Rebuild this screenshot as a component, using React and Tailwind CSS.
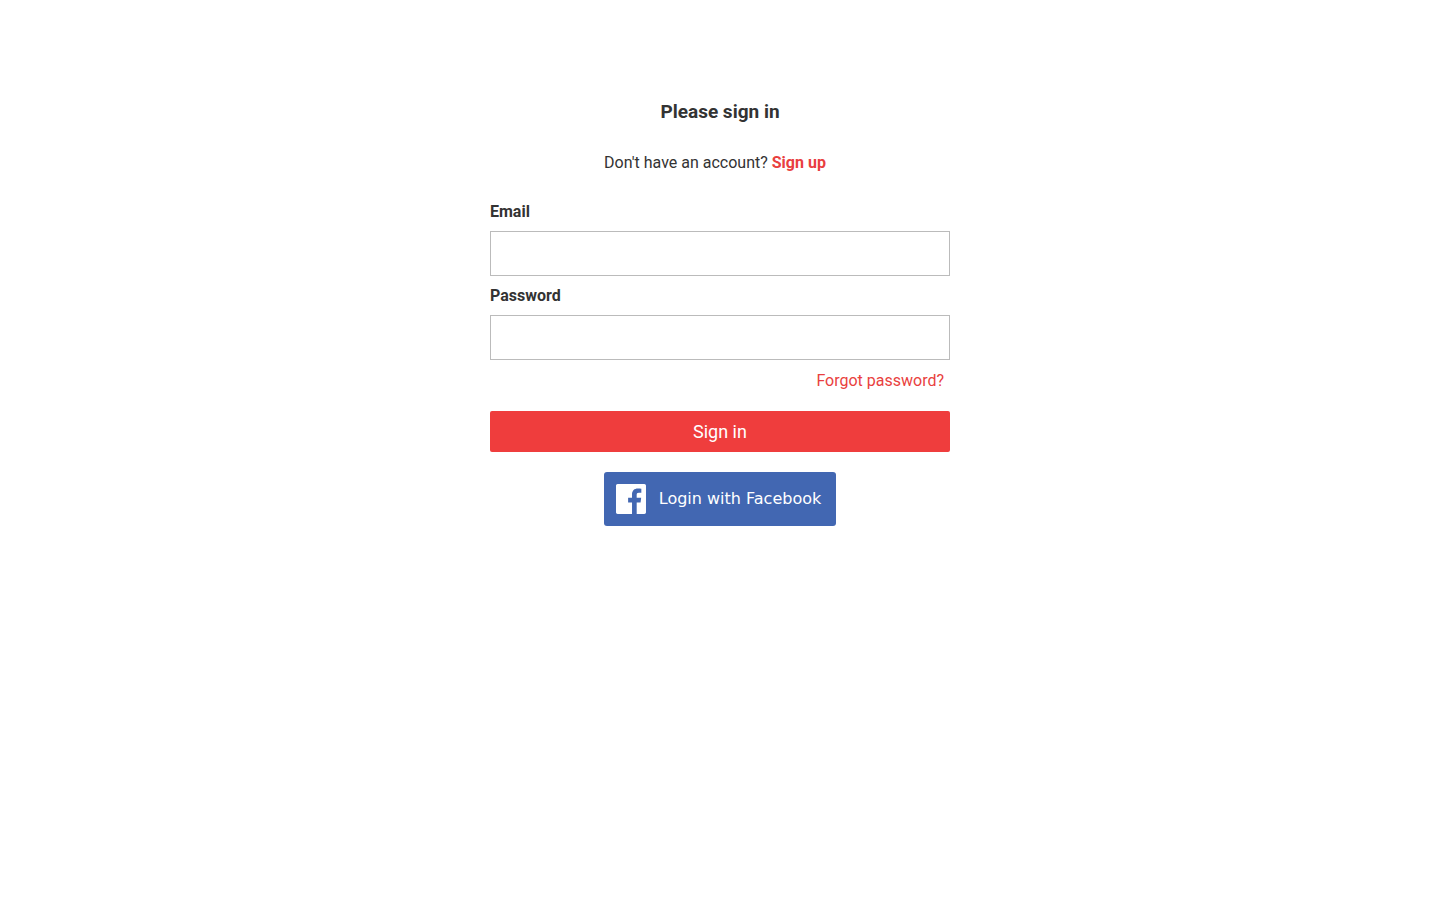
import { useState } from "react";

function FacebookIcon() {
    return (
        <svg viewBox="0 0 216 216" className="size-[30px]" fill="#fff" aria-hidden="true">
            <path d="M204.1 0H11.9C5.3 0 0 5.3 0 11.9v192.2c0 6.6 5.3 11.9 11.9 11.9h103.5v-83.6H87.2V99.8h28.1V75.7c0-27.9 17-43.1 41.9-43.1 11.9 0 22.2.9 25.2 1.3v29.2h-17.3c-13.5 0-16.2 6.4-16.2 15.9v20.8h32.3l-4.2 32.6h-28V216h55c6.6 0 11.9-5.3 11.9-11.9V11.9C216 5.3 210.7 0 204.1 0z" />
        </svg>
    );
}

function Field({ id, label, type, value, onChange }) {
    return (
        <div className="flex flex-col">
            <label htmlFor={id} className="leading-[39px] font-bold">
                {label}
            </label>
            <input
                id={id}
                name={id}
                type={type}
                value={value}
                onChange={onChange}
                className="h-[45px] w-full border border-[#bbb] bg-white px-3"
            />
        </div>
    );
}

export default function App() {
    const [formData, setFormData] = useState({ email: "", password: "" });

    const handleChange = (e) => {
        setFormData({ ...formData, [e.target.name]: e.target.value });
    };

    const handleSubmit = (e) => {
        e.preventDefault();
        console.log(formData);
    };

    return (
        <main className="mx-auto w-full max-w-[460px] pt-24 font-['Roboto',sans-serif] text-base text-[#333]">
            <h3 className="text-center text-[19px] leading-8 font-bold">Please sign in</h3>
            <p className="mt-5 pr-[10px] text-center leading-[30px]">
                Don't have an account?{" "}
                <a href="#signup" className="font-bold text-[#e93f40]">
                    Sign up
                </a>
            </p>

            <form onSubmit={handleSubmit} className="mt-[14px]">
                <Field id="email" label="Email" type="email" value={formData.email} onChange={handleChange} />
                <Field id="password" label="Password" type="password" value={formData.password} onChange={handleChange} />
                <div className="mt-[6px] pr-[6px] text-right leading-[30px]">
                    <a href="#forgot" className="text-[#e93f40]">
                        Forgot password?
                    </a>
                </div>
                <button type="submit" className="mt-[15px] h-[41px] w-full rounded-xs bg-[#ef3d3d] text-lg text-white">
                    Sign in
                </button>
            </form>

            {/* Social login */}
            <div className="mt-5 flex justify-center">
                <button
                    type="button"
                    className="flex h-[54px] min-w-[232px] items-center gap-[10px] rounded-[3px] bg-[#4267b2] px-3 font-['DejaVu_Sans',sans-serif] text-white"
                >
                    <FacebookIcon />
                    <span className="flex-1 text-center">Login with Facebook</span>
                </button>
            </div>
        </main>
    );
}
